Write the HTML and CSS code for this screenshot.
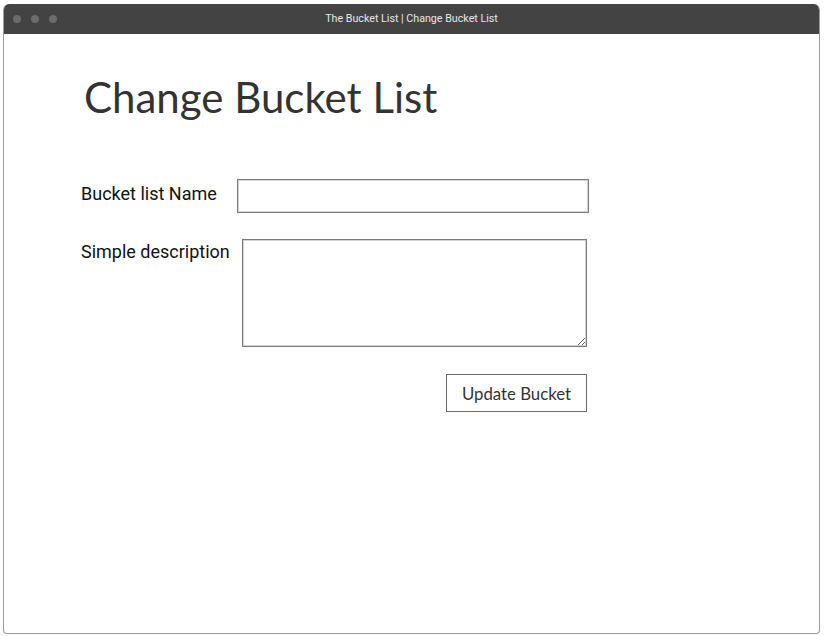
FILE: index.html
```html
<!DOCTYPE html>
<html>
<head>
<meta charset="utf-8">
<title>The Bucket List | Change Bucket List</title>
<link rel="stylesheet" href="styles.css">
</head>
<body>
<div class="window">
  <div class="titlebar">
    <div class="dots"><span class="dot"></span><span class="dot"></span><span class="dot"></span></div>
    <div class="title">The Bucket List | Change Bucket List</div>
  </div>
  <div class="content">
    <h1 class="heading">Change Bucket List</h1>
    <form class="form">
      <div class="row row-name">
        <label class="label" for="name">Bucket list Name</label>
        <input class="input" id="name" type="text">
      </div>
      <div class="row row-desc">
        <label class="label" for="desc">Simple description</label>
        <textarea class="textarea" id="desc"></textarea>
      </div>
      <div class="actions">
        <button class="button" type="button">Update Bucket</button>
      </div>
    </form>
  </div>
</div>
</body>
</html>
```

FILE: styles.css
```css
html, body {
  margin: 0;
  padding: 0;
  background: #ffffff;
}
.window {
  margin: 4px 6px 0 3px;
  height: 630px;
  box-sizing: border-box;
  border: 1px solid #9a9a9a;
  border-top: none;
  border-radius: 6px 6px 4px 4px;
  overflow: hidden;
  display: flex;
  flex-direction: column;
  background: #fff;
}
.titlebar {
  height: 30px;
  background: #434343;
  display: flex;
  align-items: center;
  position: relative;
  flex: none;
}
.dots {
  display: flex;
  gap: 10px;
  padding-left: 9px;
}
.dot {
  width: 8px;
  height: 8px;
  border-radius: 50%;
  background: #6b6b6b;
}
.title {
  position: absolute;
  left: 0;
  right: 0;
  top: 8px;
  text-align: center;
  font-family: Roboto, "Liberation Sans", sans-serif;
  font-size: 10.7px;
  line-height: 13px;
  color: #e6e6e6;
}
.content {
  padding: 0 0 0 77px;
}
.heading {
  margin: 37px 0 0 3px;
  font-family: Lato, "Open Sans", sans-serif;
  font-weight: 400;
  font-size: 42px;
  line-height: 52px;
  color: #333;
}
.form {
  margin-top: 56px;
  font-family: Roboto, "Liberation Sans", sans-serif;
  font-size: 18px;
  color: #111;
}
.row {
  display: flex;
}
.row-name {
  align-items: center;
  gap: 20px;
}
.row-name .label {
  margin-bottom: 6px;
}
.row-desc {
  margin-top: 26px;
  align-items: flex-start;
  gap: 12px;
}
.row-desc .label {
  margin-top: 2px;
}
.input {
  width: 352px;
  height: 34px;
  box-sizing: border-box;
  border: 1px solid #7a7a7a;
  box-shadow: inset 0 0 0 1px #d4d4d4;
  padding: 0 6px;
  font: inherit;
  margin: 0;
}
.textarea {
  width: 345px;
  height: 108px;
  box-sizing: border-box;
  border: 1px solid #7a7a7a;
  box-shadow: inset 0 0 0 1px #d4d4d4;
  font: inherit;
  margin: 0;
  padding: 4px;
}
.actions {
  display: flex;
  justify-content: flex-end;
  width: 506px;
  margin-top: 27px;
}
.button {
  width: 141px;
  height: 38px;
  box-sizing: border-box;
  background: #fff;
  border: 1px solid #6a6a6a;
  font-family: Lato, "Open Sans", sans-serif;
  font-size: 16.8px;
  color: #333;
  margin: 0;
  padding: 0;
}
```
